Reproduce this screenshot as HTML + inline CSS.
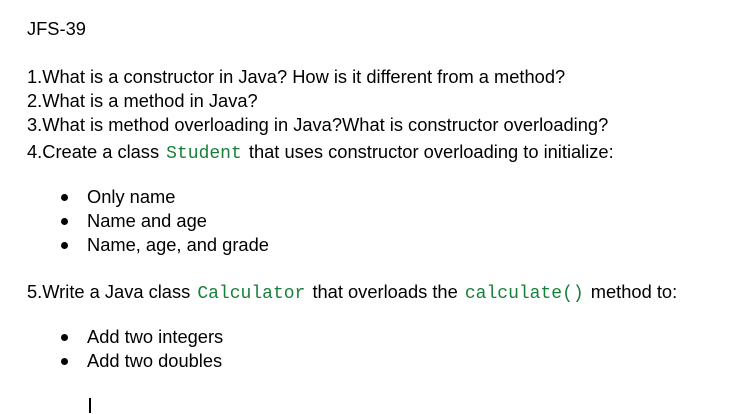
<!DOCTYPE html>
<html><head><style>
body{margin:0;width:748px;height:414px;background:#fff;font-family:"Liberation Sans",Arial,sans-serif;font-size:18.3px;color:#000;position:relative;overflow:hidden}
.l{position:absolute;left:27px;line-height:20px;white-space:nowrap}
.b{left:87px}
.b::before{content:"";position:absolute;left:-26px;top:7px;width:7px;height:7px;border-radius:50%;background:#000}
code{font-family:"Liberation Mono",monospace;color:#188038;font-size:18px;padding:0 2px}
.cur{position:absolute;left:89px;top:398px;width:2px;height:15px;background:#000}
</style></head><body>
<div class="l" style="top:19px">JFS-39</div>
<div class="l" style="top:67px">1.What is a constructor in Java? How is it different from a method?</div>
<div class="l" style="top:91px">2.What is a method in Java?</div>
<div class="l" style="top:115px">3.What is method overloading in Java?What is constructor overloading?</div>
<div class="l" style="top:142px">4.Create a class <code>Student</code> that uses constructor overloading to initialize:</div>
<div class="l b" style="top:187px">Only name</div>
<div class="l b" style="top:211px">Name and age</div>
<div class="l b" style="top:235px">Name, age, and grade</div>
<div class="l" style="top:282px">5.Write a Java class <code>Calculator</code> that overloads the <code>calculate()</code> method to:</div>
<div class="l b" style="top:327px">Add two integers</div>
<div class="l b" style="top:351px">Add two doubles</div>
<div class="cur"></div>
</body></html>
